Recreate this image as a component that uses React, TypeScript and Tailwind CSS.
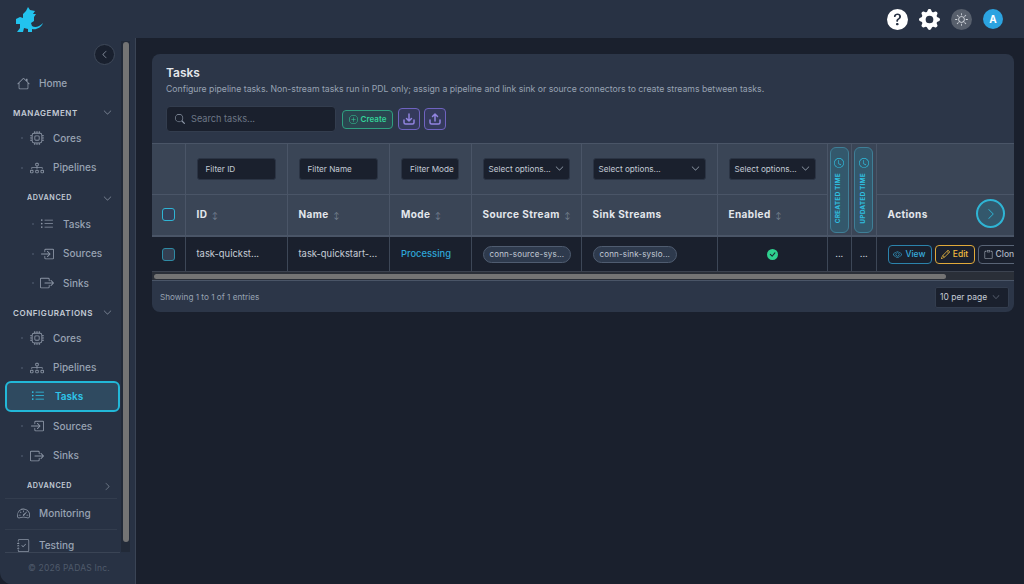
import { BsCpu, BsDiagram3, BsBoxArrowInRight, BsBoxArrowRight, BsSpeedometer2, BsHouse, BsJournalCheck, BsCheckCircleFill, BsClock, BsEye, BsPencil, BsClipboard, BsChevronDown, BsChevronLeft, BsChevronRight, BsQuestionCircleFill, BsGearFill, BsSun, BsSearch, BsPlusCircle, BsListUl } from "react-icons/bs";

const font = { fontFamily: "Inter, sans-serif" };

const Dragon = () => (
  <svg width="28" height="27" viewBox="0 0 28 27" fill="#22c3ee">
    <path d="M13 1L15 4L20 5L18 8L21 8L19 11L19 15L16 17L17 20C20 22 24 21 28 17C26 22 21 24 17 23L17 26L13 26L13 23L9 22L8 26L2 26L5 22L5 18L1 18L1 13L5 11L8 12L8 8L11 5Z" />
  </svg>
);

const Tray = ({ up = false }: { up?: boolean }) => (
  <svg width="14" height="14" viewBox="0 0 14 14" fill="none" stroke="#9184e0" strokeWidth="1.5" strokeLinecap="round" strokeLinejoin="round">
    <path d="M2 8v2.5A1.5 1.5 0 0 0 3.500 12h7a1.500 1.500 0 0 0 1.500-1.500V8" />
    {up ? <path d="M7 9V2M4.500 4.500L7 2l2.500 2.500" /> : <path d="M7 2v7M4.500 6.500L7 9l2.500-2.500" />}
  </svg>
);

const Item = ({ icon: Icon, label, level = 0, active = false }: any) => {
  if (active) {
    return (
      <div className="h-[31px] -mt-[2px] ml-[5px] w-[115px] flex items-center rounded-md border-2 border-[#22b8d8] bg-[#2f4a60] text-[#2ec5ea] text-[10px] font-semibold pl-[24px] gap-[10px]">
        <Icon size={14} />
        <span>{label}</span>
      </div>
    );
  }
  return (
    <div className={`flex items-center text-[#98a3b3] text-[10px] font-medium h-[29.5px] gap-[9px] ${level === 2 ? "pl-[32px]" : "pl-[21px]"}`}>
      <span className={`w-[2px] h-[2px] rounded-full bg-[#465264] ${level === 2 ? "-mr-[3px]" : "-mr-[2px]"}`} />
      <Icon size={14} className="text-[#8b95a5]" />
      <span>{label}</span>
    </div>
  );
};

const Section = ({ label, sub = false, open = true }: any) => (
  <div className={`flex items-center justify-between pr-[23px] font-semibold ${sub ? "h-[27px] pt-[4px] pl-[27px] text-[7.2px] tracking-[0.08em]" : "h-[25.5px] pt-[4px] pl-[13px] text-[8px] tracking-[0.07em]"} text-[#c3cad5]`}>
    <span>{label}</span>
    {open ? <BsChevronDown size={9} className="text-[#7d8796]" /> : <BsChevronRight size={9} className="text-[#7d8796]" />}
  </div>
);

const Sidebar = () => (
  <aside className="relative w-[136px] shrink-0 bg-[#283244] border-r border-[#3a4455] flex flex-col overflow-hidden rounded-bl-xl">
    <div className="absolute left-[94px] top-[6px] w-[21px] h-[21px] rounded-full bg-[#19202e] border border-[#3f4959] flex items-center justify-center z-10">
      <BsChevronLeft size={9} className="text-[#99a3b1]" />
    </div>
    <div className="absolute left-[121px] top-[3px] bottom-[32px] w-[9px] bg-[#222a38]">
      <div className="mx-auto mt-[1px] w-[6px] h-[500px] rounded-full bg-[#747474]" />
    </div>
    <div className="flex-1 min-h-0 overflow-hidden pt-[30px]">
      <div className="flex items-center h-[30px] pl-[17px] gap-[9px] text-[10px] font-medium text-[#98a3b3]">
        <BsHouse size={13} className="text-[#8b95a5]" /> Home
      </div>
      <Section label="MANAGEMENT" />
      <Item icon={BsCpu} label="Cores" />
      <Item icon={BsDiagram3} label="Pipelines" />
      <Section label="ADVANCED" sub />
      <Item icon={BsListUl} label="Tasks" level={2} />
      <Item icon={BsBoxArrowInRight} label="Sources" level={2} />
      <Item icon={BsBoxArrowRight} label="Sinks" level={2} />
      <Section label="CONFIGURATIONS" />
      <Item icon={BsCpu} label="Cores" />
      <Item icon={BsDiagram3} label="Pipelines" />
      <Item icon={BsListUl} label="Tasks" active />
      <Item icon={BsBoxArrowInRight} label="Sources" />
      <Item icon={BsBoxArrowRight} label="Sinks" />
      <Section label="ADVANCED" sub open={false} />
      <div className="flex items-center h-[31px] pl-[17px] gap-[9px] text-[10px] font-medium text-[#98a3b3] border-t border-[#333d4e] w-[112px] ml-[5px]">
        <BsSpeedometer2 size={13} className="-ml-[5px] text-[#8b95a5]" /> Monitoring
      </div>
      <div className="flex items-center h-[32px] pl-[17px] gap-[9px] text-[10px] font-medium text-[#98a3b3] border-t border-[#333d4e] w-[112px] ml-[5px]">
        <BsJournalCheck size={13} className="-ml-[5px] text-[#8b95a5]" /> Testing
      </div>
    </div>
    <div className="h-[32px] ml-[5px] w-[115px] border-t border-[#3a4455] flex items-center pl-[23px] text-[8.5px] text-[#4f5a6b] tracking-wide bg-[#283244] whitespace-nowrap">
      © 2026 PADAS Inc.
    </div>
  </aside>
);

const Filter = ({ text, w, chevron = false }: any) => (
  <div className={`${w} h-[22px] bg-[#1a202d] rounded-[3px] border border-[#2b3444] flex items-center justify-between ${chevron ? "pl-[5px]" : "pl-[8px]"} pr-[5px] text-[8.2px] font-normal tracking-normal whitespace-nowrap text-[#c3cad5]`}>
    <span>{text}</span>
    {chevron && <BsChevronDown size={9} className="text-[#9aa4b2]" />}
  </div>
);

const Sort = () => <span className="text-[#7d8796] text-[7px] ml-[2px] font-normal">↕</span>;

const Th = ({ children, className = "", ...rest }: any) => (
  <th {...rest} className={`border-r border-[#4a5567] text-left align-middle font-bold text-[10px] tracking-[0.04em] whitespace-nowrap text-[#e3e7ec] px-[11px] ${className}`}>{children}</th>
);

const Td = ({ children, className = "" }: any) => (
  <td className={`border-r border-[#3d4757] align-middle text-[9.4px] whitespace-nowrap text-[#c9cfd8] px-[11px] ${className}`}>{children}</td>
);

const Pill = ({ children }: any) => (
  <span className="inline-block h-[17px] leading-[15px] rounded-full border border-[#4f5c70] bg-[#2e3a4d] px-[6px] text-[8px] tracking-[0.02em] text-[#c3cad5]">{children}</span>
);

const VerticalHead = ({ text }: any) => (
  <div className="mx-auto w-[19px] h-[86px] rounded-[6px] border border-[#3f7f97] bg-[#33586c] flex flex-col items-center pt-[10px] gap-[5px] text-[#2fbfe0]">
    <BsClock size={10} />
    <span className="text-[6.5px] font-bold tracking-[0.03em] whitespace-nowrap [writing-mode:vertical-rl] rotate-180">{text}</span>
  </div>
);

const TaskTable = () => (
  <div className="relative overflow-hidden border-y border-[#4a5567]">
    <table className="table-fixed border-collapse w-[880px]">
      <colgroup>
        <col className="w-[33px]" />
        <col className="w-[102px]" />
        <col className="w-[102.5px]" />
        <col className="w-[81.5px]" />
        <col className="w-[110px]" />
        <col className="w-[136px]" />
        <col className="w-[110px]" />
        <col className="w-[24.5px]" />
        <col className="w-[24.5px]" />
        <col className="w-[156px]" />
      </colgroup>
      <thead className="bg-[#3a4556]">
        <tr className="h-[50px] border-b border-[#4a5567]">
          <Th />
          <Th><Filter text="Filter ID" w="w-[79px]" /></Th>
          <Th><Filter text="Filter Name" w="w-[79px]" /></Th>
          <Th><Filter text="Filter Mode" w="w-[58px]" /></Th>
          <Th><Filter text="Select options..." w="w-[87px]" chevron /></Th>
          <Th><Filter text="Select options..." w="w-[113px]" chevron /></Th>
          <Th><Filter text="Select options..." w="w-[87px]" chevron /></Th>
          <Th className="!px-0" rowSpan={2}><VerticalHead text="CREATED TIME" /></Th>
          <Th className="!px-0" rowSpan={2}><VerticalHead text="UPDATED TIME" /></Th>
          <Th />
        </tr>
        <tr className="h-[42px] border-b-2 border-[#4a5567]">
          <Th><span className="block w-[13px] h-[13px] rounded-[3px] border border-[#2fb4d4] bg-[#33405a] -ml-[1px]" /></Th>
          <Th>ID <Sort /></Th>
          <Th>Name <Sort /></Th>
          <Th>Mode <Sort /></Th>
          <Th>Source Stream <Sort /></Th>
          <Th>Sink Streams</Th>
          <Th>Enabled <Sort /></Th>
          <Th>Actions</Th>
        </tr>
      </thead>
      <tbody className="bg-[#1a202d]">
        <tr className="h-[35px]">
          <Td><span className="block w-[13px] h-[13px] rounded-[3px] border border-[#2f8ba5] bg-[#333f52] -ml-[1px]" /></Td>
          <Td>task-quickst...</Td>
          <Td>task-quickstart-...</Td>
          <Td className="!text-[#2ea6d8] font-medium">Processing</Td>
          <Td><Pill>conn-source-sys...</Pill></Td>
          <Td><Pill>conn-sink-syslo...</Pill></Td>
          <Td><BsCheckCircleFill size={11} className="mx-auto text-[#2fd08f]" /></Td>
          <Td className="!px-0 text-center">...</Td>
          <Td className="!px-0 text-center">...</Td>
          <td className="px-[11px]">
            <div className="flex gap-[3px] text-[8.5px] font-medium whitespace-nowrap">
              <span className="shrink-0 h-[19px] w-[44px] justify-center flex items-center gap-[3px] rounded-[4px] border border-[#2b83ad] text-[#37abdc]"><BsEye size={9} /> View</span>
              <span className="shrink-0 h-[19px] w-[40px] justify-center flex items-center gap-[3px] rounded-[4px] border border-[#e0a93a] text-[#efbb3f]"><BsPencil size={9} /> Edit</span>
              <span className="shrink-0 h-[19px] px-[5px] flex items-center gap-[3px] rounded-[4px] border border-[#596476] text-[#aeb6c2]"><BsClipboard size={9} /> Clone</span>
            </div>
          </td>
        </tr>
      </tbody>
    </table>
    <div className="h-[9px] bg-[#2a2f38] border-t border-[#3c4350] flex items-center">
      <div className="ml-[2px] w-[792px] h-[5px] rounded-full bg-[#747474]" />
    </div>
    <div className="absolute left-[824px] top-[55px] w-[29px] h-[29px] rounded-full border-2 border-[#2fb4d4] bg-[#33586c] flex items-center justify-center text-[#2fb4d4]">
      <BsChevronRight size={12} />
    </div>
  </div>
);

export default function App() {
  return (
    <div className="w-[1024px] h-[584px] overflow-hidden bg-[#1a202d] flex flex-col" style={font}>
      <header className="h-[38px] shrink-0 bg-[#283244] flex items-center justify-between pl-[15px] pr-[21px]">
        <Dragon />
        <div className="flex items-center gap-[11px]">
          <BsQuestionCircleFill size={21} className="text-white" />
          <BsGearFill size={21} className="text-white" />
          <span className="w-[21px] h-[21px] rounded-full bg-[#575f6c] flex items-center justify-center text-[#d5d9df]"><BsSun size={13} /></span>
          <span className="w-[20px] h-[20px] rounded-full bg-[#2ca3e0] flex items-center justify-center text-white text-[10px] font-bold">A</span>
        </div>
      </header>
      <div className="flex-1 flex min-h-0">
        <Sidebar />
        <main className="flex-1 min-w-0 pl-[16px] pr-[10px] pt-[16px]">
          <section className="rounded-lg bg-[#2c3648] overflow-hidden">
            <div className="h-[89px] pl-[14px] pt-[12px]">
              <h1 className="text-[12px] leading-[14px] font-semibold text-[#e3e7ec]">Tasks</h1>
              <p className="mt-[3px] text-[8.7px] leading-[12px] whitespace-nowrap text-[#98a3b3]">Configure pipeline tasks. Non-stream tasks run in PDL only; assign a pipeline and link sink or source connectors to create streams between tasks.</p>
              <div className="mt-[11px] flex items-center gap-[6px]">
                <div className="w-[170px] h-[26px] rounded-[4px] bg-[#1a202d] border border-[#333d4e] flex items-center pl-[8px] gap-[6px] text-[9.2px] text-[#6d7787]">
                  <BsSearch size={10} className="text-[#8b95a5]" /> Search tasks...
                </div>
                <div className="w-[51px] h-[19px] rounded-[4px] border border-[#2f9f80] bg-[#2a4650] flex items-center justify-center gap-[3px] text-[8px] font-semibold text-[#34d399]"><BsPlusCircle size={9} /> Create</div>
                <div className="w-[22px] h-[22px] -ml-[1px] rounded-[4px] border border-[#6f63c0] bg-[#343a5c] flex items-center justify-center"><Tray /></div>
                <div className="w-[22px] h-[22px] -ml-[2px] rounded-[4px] border border-[#6f63c0] bg-[#343a5c] flex items-center justify-center"><Tray up /></div>
              </div>
            </div>
            <TaskTable />
            <div className="h-[31px] pt-[1px] flex items-center justify-between pl-[8px] pr-[5px] text-[8.2px] text-[#98a3b3]">
              <span>Showing 1 to 1 of 1 entries</span>
              <div className="w-[74px] h-[21px] bg-[#1a202d] border border-[#333d4e] rounded-[2px] flex items-center justify-between pl-[4px] pr-[8px] text-[8.5px] text-[#c3cad5]">
                10 per page <BsChevronDown size={8} className="text-[#6d7787]" />
              </div>
            </div>
          </section>
        </main>
      </div>
    </div>
  );
}
